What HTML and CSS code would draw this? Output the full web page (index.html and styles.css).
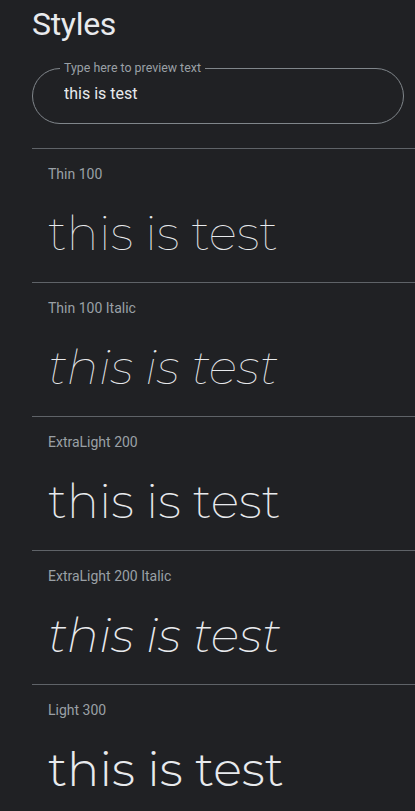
FILE: index.html
```html
<!DOCTYPE html>
<html lang="en">
<head>
<meta charset="utf-8">
<title>Styles</title>
<link rel="stylesheet" href="styles.css">
</head>
<body>
<main class="page">
  <h1 class="title">Styles</h1>
  <fieldset class="preview-field">
    <legend class="preview-legend">Type here to preview text</legend>
    <input class="preview-input" type="text" value="this is test">
  </fieldset>
  <div class="styles-list">
    <section class="style-row">
      <div class="style-name">Thin 100</div>
      <div class="style-sample w100">this is test</div>
    </section>
    <section class="style-row">
      <div class="style-name">Thin 100 Italic</div>
      <div class="style-sample w100 italic">this is test</div>
    </section>
    <section class="style-row">
      <div class="style-name">ExtraLight 200</div>
      <div class="style-sample w200">this is test</div>
    </section>
    <section class="style-row">
      <div class="style-name">ExtraLight 200 Italic</div>
      <div class="style-sample w200 italic">this is test</div>
    </section>
    <section class="style-row">
      <div class="style-name">Light 300</div>
      <div class="style-sample w300">this is test</div>
    </section>
  </div>
</main>
</body>
</html>
```
FILE: styles.css
```css
html, body {
  margin: 0;
  padding: 0;
  background: #202124;
}
body {
  color: #e8eaed;
  font-family: Roboto, "Noto Sans", sans-serif;
  overflow: hidden;
}
.page {
  padding-left: 32px;
}
.title {
  margin: 0;
  font-size: 32px;
  font-weight: 400;
  line-height: 48px;
  letter-spacing: -0.3px;
  color: #e8eaed;
}
.preview-field {
  box-sizing: border-box;
  width: 372px;
  min-width: 0;
  margin: 13px 0 24px 0;
  padding: 0 27px 17px 27px;
  border: 1px solid #80868b;
  border-radius: 28px;
}
.preview-legend {
  padding: 0 4px;
  font-size: 12.4px;
  line-height: 14px;
  color: #9aa0a6;
}
.preview-input {
  display: block;
  box-sizing: border-box;
  width: 100%;
  margin: 7px 0 0 0;
  padding: 0 0 0 4px;
  height: 24px;
  border: none;
  outline: none;
  background: transparent;
  color: #e8eaed;
  font-family: Roboto, "Noto Sans", sans-serif;
  font-size: 16px;
  line-height: 24px;
}
.style-row {
  border-top: 1px solid #5f6368;
  padding: 15px 0 17px 16px;
}
.style-name {
  font-size: 14px;
  line-height: 20px;
  color: #9aa0a6;
}
.style-sample {
  margin-top: 17px;
  font-family: Montserrat, sans-serif;
  font-size: 48px;
  line-height: 64px;
  color: #e8eaed;
  white-space: nowrap;
}
.w100 { font-weight: 100; }
.w200 { font-weight: 200; }
.w300 { font-weight: 300; }
.italic { font-style: italic; }
```
